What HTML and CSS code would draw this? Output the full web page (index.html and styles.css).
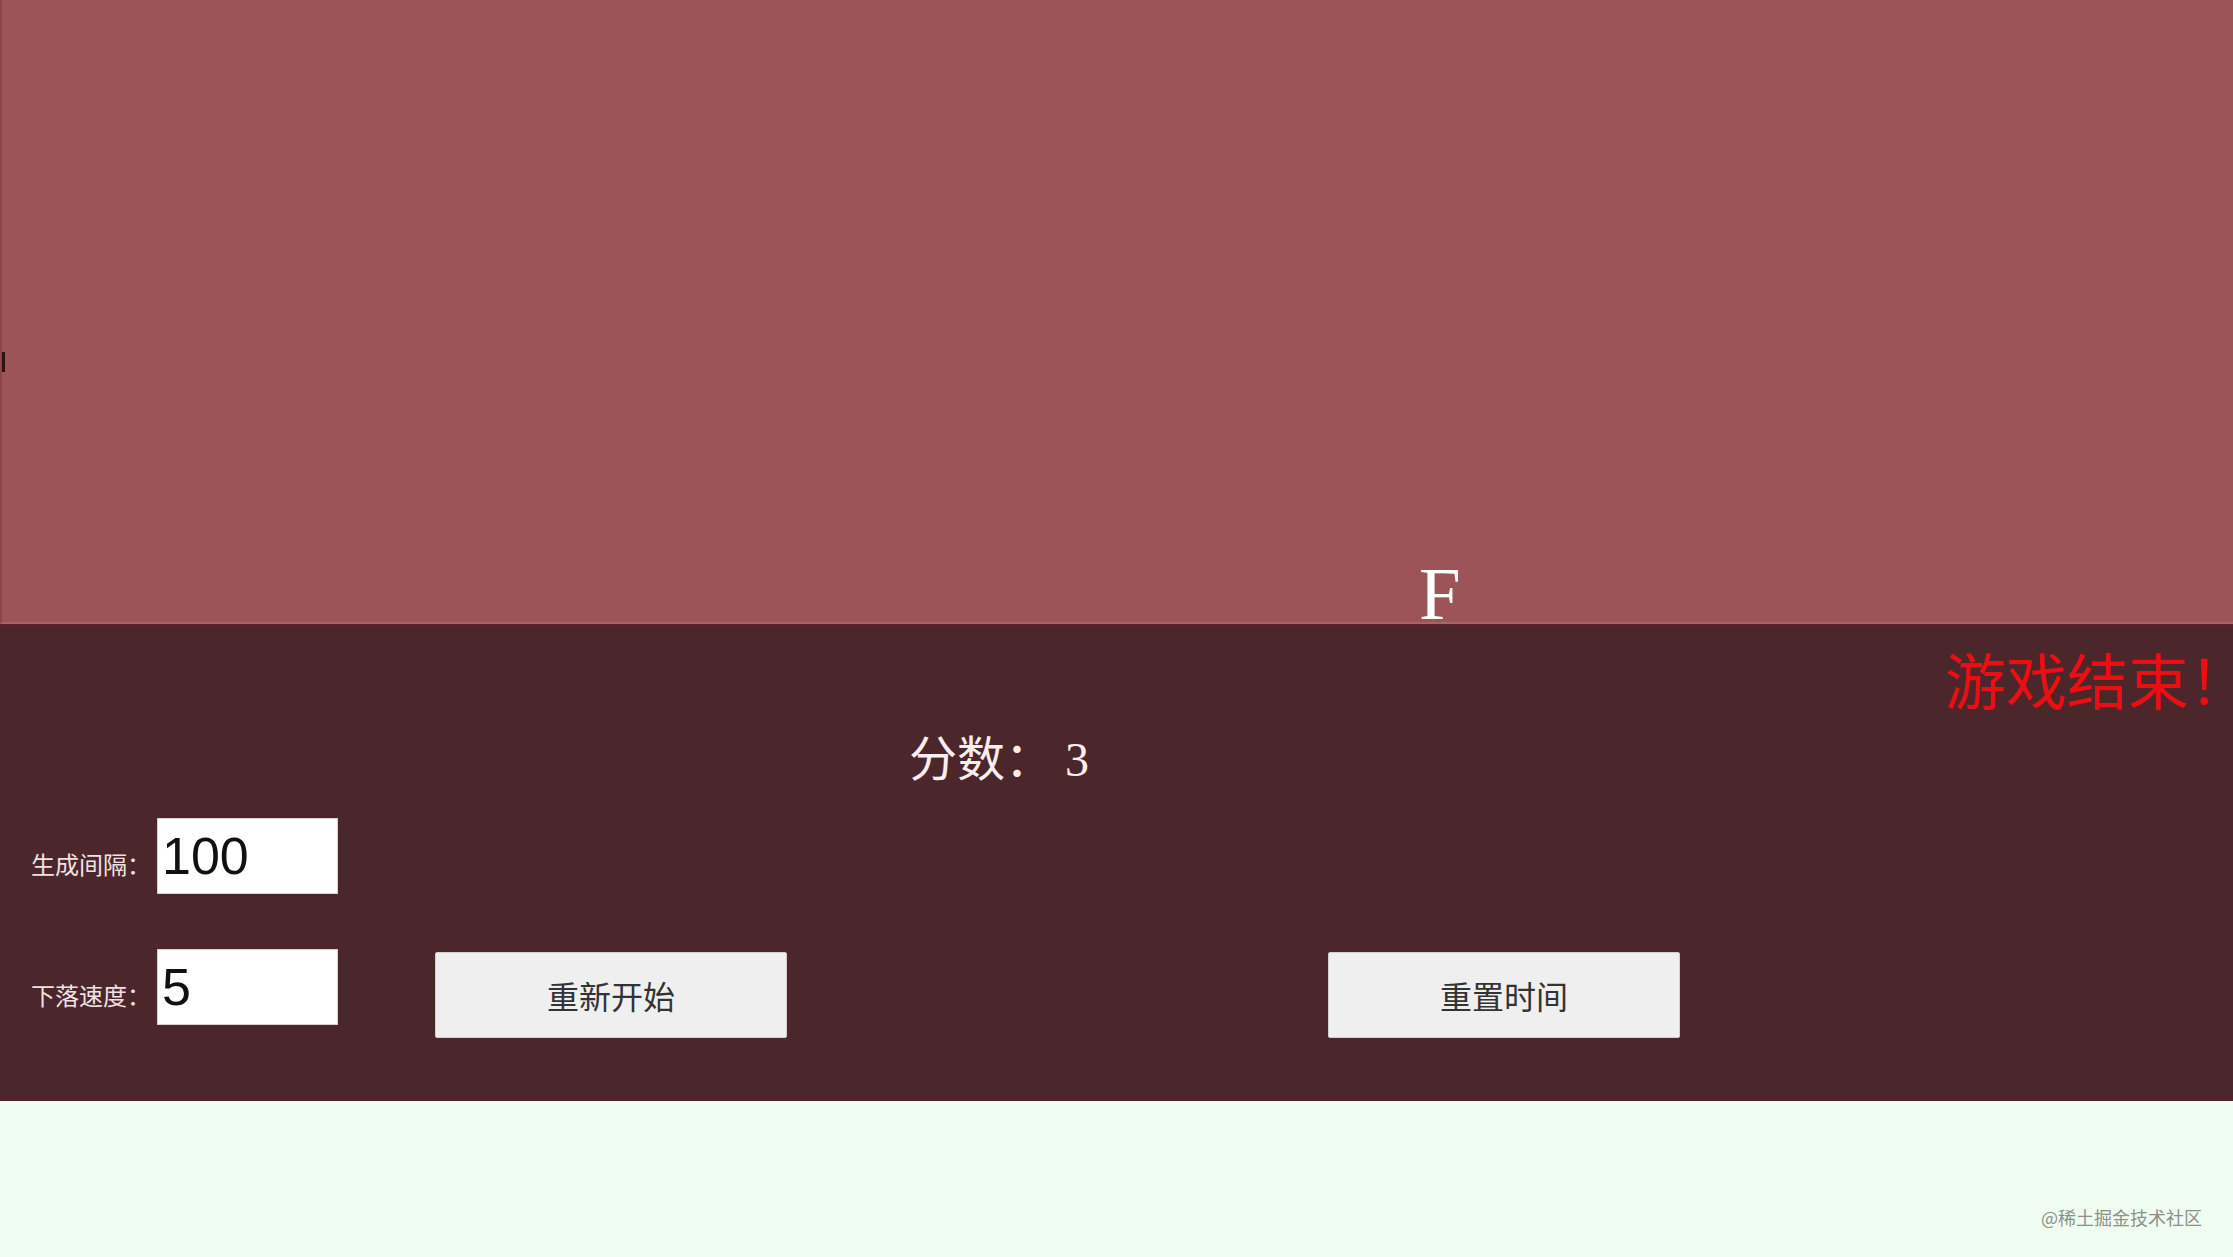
FILE: index.html
```html
<!DOCTYPE html>
<html>
	<head>
		<meta charset="UTF-8">
		<title>打字游戏</title>
		<link rel="stylesheet" href="styles.css">
	</head>
	<body>
		<!--下落区域-->
		<div id="stage">
			<span class="letter" style="left: 1417px; top: 566px;">F</span>
			<span class="letter-edge"></span>
		</div>

		<!--控制面板-->
		<div id="panel">
			<div class="over">游戏结束<span class="bang">！</span></div>
			<div class="score">分数： <span id="score">3</span></div>

			<div class="row">
				<label class="label">生成间隔：</label>
				<input class="num" type="text" value="100">
			</div>

			<div class="row row-low">
				<label class="label">下落速度：</label>
				<input class="num" type="text" value="5">
				<button class="btn btn-start">重新开始</button>
				<button class="btn btn-reset">重置时间</button>
			</div>
		</div>

		<div class="mark">@稀土掘金技术社区</div>
	</body>
</html>
```

FILE: styles.css
```css
*{
	margin: 0;
	padding: 0;
	box-sizing: border-box;
}
html,body{
	background: #effef0;
	height: 100%;
}
body{
	font-family: "Liberation Serif", "Noto Sans CJK SC", serif;
	position: relative;
	overflow: hidden;
}

/*下落区域*/
#stage{
	height: 624px;
	background: #9d5456;
	border-left: 2px solid #8a4649;
	border-bottom: 2px solid #a96466;
	position: relative;
	overflow: hidden;
}
.letter{
	position: absolute;
	font-size: 75px;
	line-height: 55px;
	color: #fff;
}
/*左边露出一点的字母*/
.letter-edge{
	position: absolute;
	left: 0;
	top: 352px;
	width: 3px;
	height: 20px;
	background: #2a1416;
}

/*控制面板*/
#panel{
	height: 477px;
	background: #4b272b;
	border-top: 2px solid #5a2327;
	padding: 17px 0 0 31px;
}
.over{
	font-family: "Noto Sans CJK SC", sans-serif;
	font-size: 61px;
	line-height: 72px;
	color: #ec0e12;
	text-align: right;
}
/*全角感叹号右边留白太多，收一点*/
.over .bang{
	letter-spacing: -17px;
}
.score{
	font-size: 48px;
	line-height: 58px;
	color: #fbeeee;
	margin: 16px 0 0 878px;
}
.row{
	display: flex;
	align-items: baseline;
	margin-top: 29px;
}
.row-low{
	margin-top: 55px;
}
.label{
	font-family: "Noto Sans CJK SC", sans-serif;
	font-size: 24px;
	line-height: 34px;
	color: #f1e2e2;
	width: 120px;
	margin-right: 6px;
}
.num{
	width: 181px;
	height: 76px;
	border: 1px solid #d8d0d0;
	background: #fff;
	padding: 0 4px;
	font-family: "Liberation Sans", sans-serif;
	font-size: 52px;
	color: #111;
	outline: none;
}
.btn{
	align-self: flex-start;
	margin-top: 3px;
	width: 352px;
	height: 86px;
	background: #efefef;
	border: 1px solid #d6cfcf;
	border-radius: 2px;
	font-family: "Noto Sans CJK SC", sans-serif;
	font-size: 32px;
	color: #333;
}
.btn-start{
	margin-left: 97px;
}
.btn-reset{
	margin-left: 541px;
}

/*水印*/
.mark{
	position: absolute;
	right: 31px;
	bottom: 30px;
	font-family: "Noto Sans CJK SC", sans-serif;
	font-size: 18px;
	line-height: 20px;
	color: #8b908b;
}
```
